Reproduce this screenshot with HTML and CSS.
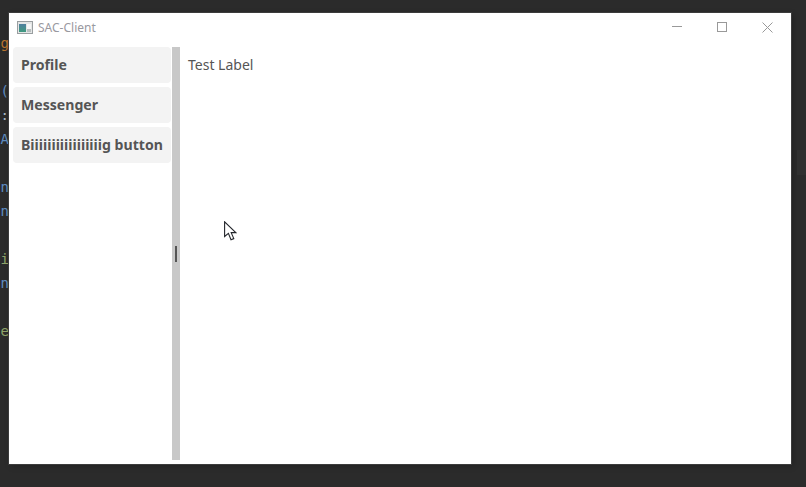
FILE: index.html
```html
<!DOCTYPE html>
<html lang="en">

<head>
    <meta charset="UTF-8">
    <meta name="viewport" content="width=device-width, initial-scale=1.0">
    <title>SAC-Client</title>
    <link rel="stylesheet" href="styles.css">
</head>

<body>
    <div class="editor">
        <div class="codeLine orange">g</div>
        <div class="codeLine"></div>
        <div class="codeLine"><span class="orange">-</span><span class="blue">(</span></div>
        <div class="codeLine grey">:</div>
        <div class="codeLine blue">A</div>
        <div class="codeLine"></div>
        <div class="codeLine blue">n</div>
        <div class="codeLine blue">n</div>
        <div class="codeLine"></div>
        <div class="codeLine green">ui</div>
        <div class="codeLine blue">n</div>
        <div class="codeLine"></div>
        <div class="codeLine green">e</div>
    </div>

    <div class="window">
        <div class="titleBar">
            <svg class="appIcon" width="16" height="13" viewBox="0 0 16 13">
                <defs>
                    <linearGradient id="iconFill" x1="0" y1="0" x2="0" y2="1">
                        <stop offset="0" stop-color="#4f7f9f" />
                        <stop offset="1" stop-color="#3f9a7f" />
                    </linearGradient>
                </defs>
                <rect x="0.5" y="0.5" width="15" height="12" fill="#e4e6e6" stroke="#999ea0" />
                <rect x="2" y="3" width="7" height="8" fill="url(#iconFill)" />
                <rect x="10" y="3" width="4" height="8" fill="#f6f7f7" />
                <rect x="10" y="8" width="4" height="3" fill="#b9bfc0" />
            </svg>
            <span class="windowTitle">SAC-Client</span>
            <div class="windowButtons">
                <svg width="10" height="10" viewBox="0 0 10 10">
                    <path d="M0 4.5H10" stroke="#999" fill="none" />
                </svg>
                <svg width="10" height="10" viewBox="0 0 10 10">
                    <rect x="0.5" y="0.5" width="9" height="9" stroke="#999" fill="none" />
                </svg>
                <svg width="11" height="11" viewBox="0 0 11 11">
                    <path d="M0.5 0.5L10.5 10.5M10.5 0.5L0.5 10.5" stroke="#999" fill="none" />
                </svg>
            </div>
        </div>

        <div class="content">
            <div class="sidebar">
                <button class="navButton" type="button">Profile</button>
                <button class="navButton" type="button">Messenger</button>
                <button class="navButton" type="button">Biiiiiiiiiiiiiiiiig button</button>
            </div>
            <div class="splitter">
                <div class="splitterHandle"></div>
            </div>
            <div class="mainPane">
                <p class="testLabel">Test Label</p>
            </div>
        </div>
    </div>

    <div class="scrollMark"></div>

    <svg class="cursor" width="13" height="20" viewBox="0 0 13 20">
        <path d="M0.6 0.8V15.5L4.4 12.4L7 18.8L9.8 17.6L7.2 11.6H11.8Z" fill="#fff" stroke="#23262b" stroke-width="1.1" />
    </svg>
</body>

</html>
```

FILE: styles.css
```css
body {
    margin: 0;
    height: 487px;
    overflow: hidden;
    display: flex;
    align-items: flex-start;
    background-color: #2b2b2b;
    font-family: "Noto Sans", sans-serif;
}

.editor {
    width: 9px;
    flex-shrink: 0;
    padding-top: 31px;
    font-family: "DejaVu Sans Mono", monospace;
    font-size: 14px;
    overflow: hidden;
}

.codeLine {
    height: 24px;
    line-height: 24px;
    display: flex;
    justify-content: flex-end;
    color: #a9b7c6;
}

.orange {
    color: #b8742f;
}

.blue {
    color: #5f8cc0;
}

.green {
    color: #8fa46a;
}

.grey {
    color: #a9b7c6;
}

.window {
    width: 782px;
    height: 451px;
    margin-top: 13px;
    background-color: #fff;
    outline: 1px solid #3c3c3c;
    box-shadow: 2px 2px 6px rgba(0, 0, 0, 0.25);
    display: flex;
    flex-direction: column;
}

.titleBar {
    height: 28px;
    padding-bottom: 6px;
    flex-shrink: 0;
    display: flex;
    align-items: center;
    padding-left: 8px;
}

.appIcon {
    margin-right: 5px;
}

.windowTitle {
    font-size: 12px;
    color: #99999f;
}

.windowButtons {
    margin-left: auto;
    display: flex;
    align-items: center;
    gap: 35px;
    padding-right: 18px;
}

.content {
    flex: 1;
    display: flex;
    padding-bottom: 4px;
}

.sidebar {
    width: 158px;
    padding-left: 4px;
    padding-right: 1px;
    flex-shrink: 0;
    display: flex;
    flex-direction: column;
    gap: 4px;
}

.navButton {
    height: 36px;
    padding: 0 0 2px 8px;
    border: none;
    border-radius: 4px;
    background-color: #f3f3f3;
    color: #555;
    font-family: "Noto Sans", sans-serif;
    font-size: 14.1px;
    font-weight: bold;
    text-align: left;
    white-space: nowrap;
}

.splitter {
    width: 8px;
    flex-shrink: 0;
    background-color: #c8c8c8;
    display: flex;
    align-items: center;
    justify-content: center;
}

.splitterHandle {
    width: 2px;
    height: 16px;
    background-color: #555;
}

.mainPane {
    flex: 1;
    padding: 8px;
}

.testLabel {
    margin: 0;
    font-size: 14px;
    line-height: 20px;
    color: #555;
}

.scrollMark {
    position: absolute;
    left: 797px;
    top: 150px;
    width: 9px;
    height: 25px;
    background-color: #303030;
}

.cursor {
    position: absolute;
    left: 224px;
    top: 221px;
}
```
